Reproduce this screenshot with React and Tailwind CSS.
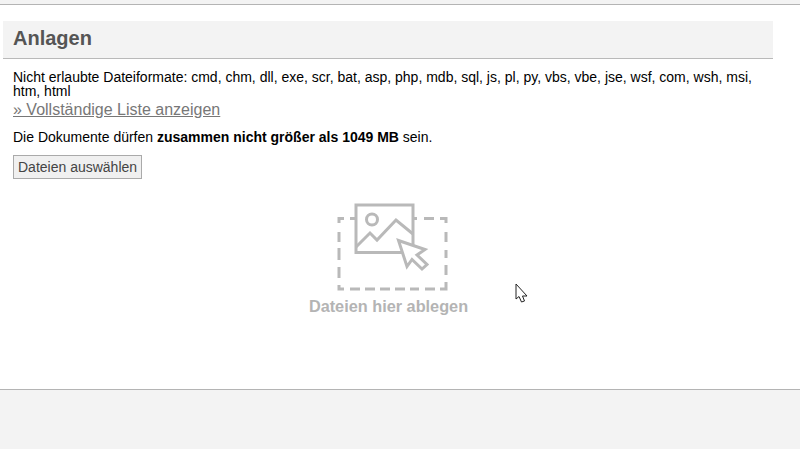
import React from 'react';

const DropIcon = () => (
  <svg width="112" height="90" viewBox="0 0 112 90" fill="none" stroke="#b9b9b9" strokeWidth="3" className="block">
    {/* gestrichelter Rahmen */}
    <path d="M2 21 V16.5 H7 M13 16.5 H18 M77 16.5 H80 M87 16.5 H97 M103 16.5 H109 V21 M109 30 V40 M109 48 V56 M109 63 V73 M109 80 V87 H103 M98 87 H88 M82 87 H73 M53 87 H43 M38 87 H28 M23 87 H13 M68 87 H58 M7 87 H2 V83 M2 76 V65 M2 58 V46 M2 40 V30" />
    <rect x="19" y="3" width="57" height="47.5" />
    <circle cx="35" cy="17.5" r="5.5" />
    <path d="M19 45 L33 31 L40 38 L59 18 L76 32" />
    <path d="M61.5 38.5 L88 47.5 L80 53 L90 62.5 L85 67 L75 57.5 L70 64.5 Z" fill="#fff" />
  </svg>
);

const Cursor = () => (
  <svg width="14" height="20" viewBox="0 0 14 20" className="absolute left-[515px] top-[283px]">
    <path d="M1 1 V16 L4 13.5 L6.5 19 L9.5 18 L7.5 13 H12 Z" fill="#fff" stroke="#222" strokeWidth="1" />
  </svg>
);

export default function App() {
  return (
    <div className="relative h-[449px] w-[800px] overflow-hidden bg-white font-['Liberation_Sans',Arial,sans-serif] text-black">
      <div className="h-[5px] border-b border-[#b4b4b4] bg-[#f3f3f3]" />
      <div className="h-[384px] pt-4 pl-[3px]">
        <div className="w-[770px]">
          <h2 className="h-[38px] border-b border-[#b9b9b9] bg-[#f3f3f3] pl-2.5 pt-[5px] text-xl leading-6 font-bold text-[#555]">Anlagen</h2>
          <div className="pl-2.5 pt-[11px]">
            <p className="text-sm leading-[14px]">
              Nicht erlaubte Dateiformate: cmd, chm, dll, exe, scr, bat, asp, php, mdb, sql, js, pl, py, vbs, vbe, jse, wsf, com, wsh, msi, htm, html
            </p>
            <a className="block pt-[3px] text-base leading-[18px] text-[#777] underline">» Vollständige Liste anzeigen</a>
            <p className="mt-[10px] text-sm leading-4">
              Die Dokumente dürfen <b>zusammen nicht größer als 1049 MB</b> sein.
            </p>
            <button className="mt-[10px] block h-6 border border-[#aaa] bg-[#f0f0f0] px-1 text-sm text-[#444]">Dateien auswählen</button>
          </div>
        </div>
        <div className="mt-[23px] flex w-[771px] flex-col items-center">
          <div className="pl-2">
            <DropIcon />
          </div>
          <div className="mt-[5px] text-[16.3px] font-bold leading-[18px] text-[#b4b4b4]">Dateien hier ablegen</div>
        </div>
      </div>
      <div className="h-[60px] border-t border-[#b4b4b4] bg-[#f3f3f3]" />
      <Cursor />
    </div>
  );
}
